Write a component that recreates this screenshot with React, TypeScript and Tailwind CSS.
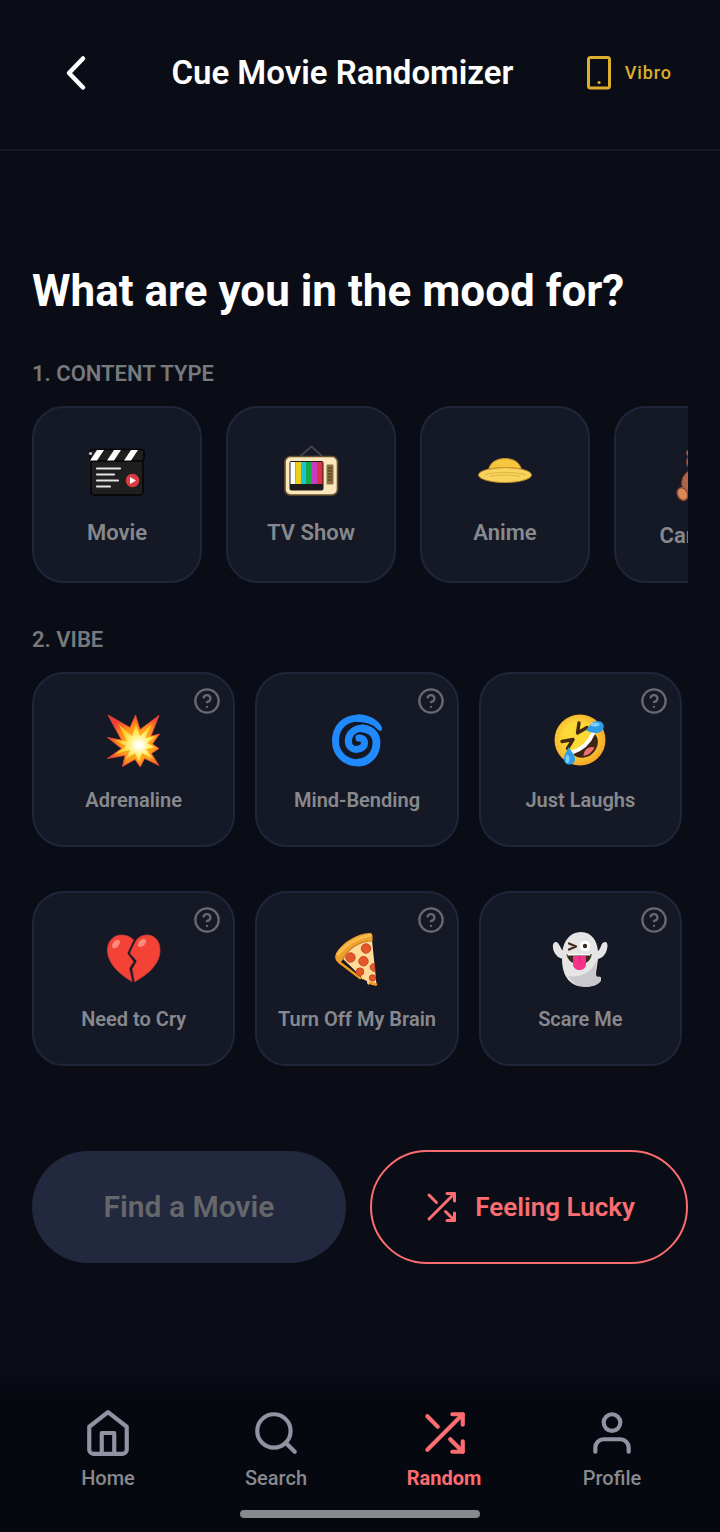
import React from 'react';
import { FiHelpCircle, FiHome, FiSearch, FiShuffle, FiUser } from 'react-icons/fi';

interface Option {
  label: string;
  icon: React.ReactNode;
}

const ClapperIcon = () => (
  <svg viewBox="0 0 60 60" className="h-15 w-15" aria-hidden="true">
    <rect x="4" y="17" width="52" height="35" rx="3.5" fill="#1f1f1f" stroke="#050505" strokeWidth="1.5" />
    <rect x="3" y="6.5" width="54" height="11.5" rx="3" fill="#1f1f1f" stroke="#050505" strokeWidth="1.5" />
    <path d="M10 7h7l-7 10.500H3zM27 7h7l-7 10.500h-7zM44 7h7l-7 10.500h-7z" fill="#fff" />
    <circle cx="3.500" cy="10.500" r="1.600" fill="#c7c7cc" />
    <path d="M10 25.500h23M10 31.500h17M10 37.500h21M10 43.500h13" stroke="#e4e4e4" strokeWidth="2.200" strokeLinecap="round" />
    <circle cx="45.500" cy="37.500" r="6.800" fill="#dc3a41" />
    <path d="M43 34l6 3.500-6 3.500z" fill="#fff" />
  </svg>
);

const TvIcon = () => (
  <svg viewBox="0 0 60 60" className="h-15 w-15" aria-hidden="true">
    <path d="M19.500 13L30.500 3.500 41 13" fill="none" stroke="#464347" strokeWidth="1.800" />
    <rect x="4" y="13.500" width="52.500" height="38.500" rx="5.500" fill="#fbe7bb" stroke="#66512f" strokeWidth="1.600" />
    <rect x="8.500" y="18" width="34" height="29.500" rx="2" fill="#1b1a1d" />
    <path d="M9.500 19h5v22h-5z" fill="#fff" />
    <path d="M14.500 19h5.500v22h-5.500z" fill="#efcf13" />
    <path d="M20 19h5v22h-5z" fill="#1cc3d6" />
    <path d="M25 19h5v22h-5z" fill="#10ad47" />
    <path d="M30 19h6v22h-6z" fill="#c83bc4" />
    <path d="M36 19h5.500v22H36z" fill="#dc3245" />
    <rect x="45.500" y="21.500" width="7" height="20" rx="1" fill="#8a7044" />
    <path d="M47 25h4M47 28h4M47 31h4M47 34h4M47 37h4" stroke="#453518" strokeWidth="1.200" />
  </svg>
);

const HatIcon = () => (
  <svg viewBox="0 0 60 60" className="h-15 w-15" aria-hidden="true">
    <path d="M13.500 27C15 19 22 15.500 30 15.500S45 19 46.500 27v3h-33z" fill="#f6c63e" stroke="#bd892a" />
    <ellipse cx="30" cy="32" rx="26.500" ry="7.500" fill="#f8d45c" stroke="#bd892a" />
    <path d="M13.500 26.500c9-2.500 24-2.500 33 0" fill="none" stroke="#cb9a31" />
    <path d="M9 32c10-3.500 32-3.500 42 0M15 33.500c9-2 21-2 30 0" fill="none" stroke="#d9aa3d" strokeWidth="0.800" />
  </svg>
);

const BearIcon = () => (
  <svg viewBox="0 0 66 66" className="h-[66px] w-[66px]" aria-hidden="true">
    <g fill="#ad6448" stroke="#7d412d">
      <circle cx="25" cy="13" r="4.500" />
      <circle cx="41" cy="13" r="4.500" />
      <ellipse cx="33" cy="43" rx="17.500" ry="15" />
      <ellipse cx="33" cy="22" rx="12.500" ry="11" />
    </g>
    <g fill="#dc8858" stroke="#8c4a30" strokeWidth="1.500">
      <ellipse cx="16.500" cy="54" rx="5" ry="6.500" transform="rotate(-25 16.500 54)" />
      <ellipse cx="49.500" cy="54" rx="5" ry="6.500" transform="rotate(25 49.500 54)" />
      <ellipse cx="33" cy="26" rx="5" ry="4" />
    </g>
    <path d="M28 19h.1M38 19h.1M33 24h.1" stroke="#2c1810" strokeWidth="3" strokeLinecap="round" />
  </svg>
);

const BurstIcon = () => (
  <svg viewBox="0 0 60 60" className="h-15 w-15" aria-hidden="true">
    <defs>
      <radialGradient id="burst" gradientUnits="userSpaceOnUse" cx="35" cy="35" r="32">
        <stop offset="0.250" stopColor="#ffb21a" />
        <stop offset="0.650" stopColor="#ff8a1c" />
        <stop offset="1" stopColor="#ee3f35" />
      </radialGradient>
      <radialGradient id="flash" gradientUnits="userSpaceOnUse" cx="35" cy="35" r="20">
        <stop offset="0.100" stopColor="#fff" />
        <stop offset="0.500" stopColor="#fff07a" />
        <stop offset="1" stopColor="#ffc822" />
      </radialGradient>
    </defs>
    <path
      d="M4 5l22 12.500L31.500 5 36 19.500 55 5.500 47 26l8.500-2-7 10 6.500 4.500-7.500 5L55 55.500l-14.500-7-4.200 8.500-5.300-7.500-12.500 7L21 45.500 3.500 48.500l14-10L3.500 27.500l14 2.500z"
      fill="url(#burst)"
      stroke="#e9483b"
      strokeWidth="0.800"
    />
    <path
      d="M15 15l13 11 4-11 4 11 12-12-7 14 11-2-9 7 8 4.500-9 1.500 7 10-11-6-3 9-4-9-9 6 4-9-15 4 11-8-11-6 12 1z"
      fill="url(#flash)"
    />
  </svg>
);

const CycloneIcon = () => (
  <svg viewBox="0 0 60 60" className="h-15 w-15" aria-hidden="true">
    <path d="M30 4.300C42 4.300 52 10 55 17.500c.7 3-1.500 4.500-3.500 2.800C46 14 39 12 30 12z" fill="#2089fb" />
    <path
      d="M31 8.150C17 8.150 8.500 18 8.500 31c0 12.500 9.500 21.700 21.500 21.700S49.500 43.500 49.500 32.500c0-9-7-14.200-14.500-14.200-8 0-13.700 5.700-13.700 12.700 0 5 3.700 8.500 8.200 8.500s8-3 8-6.500-3-5.500-5.500-5"
      fill="none"
      stroke="#2089fb"
      strokeWidth="7"
      strokeLinecap="round"
    />
    <path d="M34 18.300c8 0 15.500 5.200 15.500 14.200C49.500 43.500 42 52.700 30 52.700" fill="none" stroke="#2089fb" strokeWidth="7.800" />
  </svg>
);

const LaughIcon = () => (
  <svg viewBox="0 0 60 60" className="h-15 w-15" aria-hidden="true">
    <defs>
      <radialGradient id="laugh" cx="0.450" cy="0.450" r="0.550">
        <stop offset="0.500" stopColor="#fdd936" />
        <stop offset="1" stopColor="#f5a92c" />
      </radialGradient>
    </defs>
    <circle cx="30" cy="30" r="25.500" fill="url(#laugh)" />
    <path d="M22 43C32 40 40 32 43 23c7 3 6.500 15-1 21-6 5-15 5.500-20-1z" fill="#3d2415" />
    <path d="M33.500 46c0-6 5.500-10.500 11-8.500-2.500 5-6 7.500-11 8.500z" fill="#ed706f" />
    <path d="M22 42.500C32 39 39.500 32 43 23.500" fill="none" stroke="#fff" strokeWidth="4" strokeLinecap="round" />
    <path d="M29 13l-1.500 10 9.500-5.500M12 31.500l11-2-5.500 9" fill="none" stroke="#422814" strokeWidth="3.400" strokeLinecap="round" strokeLinejoin="round" />
    <path d="M35.500 20c3.500-1.500 5-9 12-9 9 0 8 12-1 12-5 0-7.500-1-11-3z" fill="#2e9de8" />
    <path d="M18.500 37c1.500 3 7 8 6.500 12.500-.5 6.500-10.500 7-11 0-.2-5 3-8 4.500-12.500z" fill="#2e9de8" />
    <ellipse cx="45" cy="14.500" rx="4.500" ry="2" fill="#7cceff" />
    <ellipse cx="17.500" cy="49" rx="1.800" ry="4" fill="#7cceff" />
  </svg>
);

const BrokenHeartIcon = () => (
  <svg viewBox="0 0 60 60" className="h-15 w-15" aria-hidden="true">
    <g fill="#f44336" stroke="#cf3b3b" strokeWidth="0.800">
      <path d="M29.500 11C26 7 21 6 17 6 8 6.500 3.500 13.500 3.500 21 3.500 36 18 46.500 28 52.500l-2.800-13.200 4.200-6.600-6.200-8.400z" />
      <path d="M31.500 12.500C34 8 39 6 43 6c8.500 0 13 7 13 15 0 15-13.500 25-25.300 31.800L28.500 40l4.500-8-7-7.700z" />
    </g>
    <ellipse cx="12" cy="15" rx="3" ry="5" transform="rotate(38 12 15)" fill="#ff8b7d" />
    <ellipse cx="38" cy="14" rx="3" ry="5" transform="rotate(48 38 14)" fill="#ff8b7d" />
  </svg>
);

const PizzaIcon = () => (
  <svg viewBox="0 0 60 60" className="h-15 w-15" aria-hidden="true">
    <path d="M15 29C21 18 33 10 45 11l4.500 44.500c-1 1.500-4 .5-7-1-.5 2-2.500 1.500-2.500-2.500-2-1-2.500 0-3-2-1.500 1.500-2.500 0-3-2.500z" fill="#ffdb99" />
    <path d="M12 33l21 16M43 54l6 1.500" stroke="#f19a1e" strokeWidth="2.500" strokeLinecap="round" />
    <path d="M10 32.500C7 29 8 25 11.500 20.500 20 10.500 31 5 42 4c3-.5 4 1 3.500 7.500C34 11.500 21 19 16 30c-1 3-4 4.500-6 2.500z" fill="#efa02b" />
    <path d="M11 25C20 14 31 8.500 43 6.500" fill="none" stroke="#f9bb4b" strokeWidth="3" strokeLinecap="round" />
    <path d="M16 30c5-10 16-18 29.500-18" fill="none" stroke="#c97b29" strokeWidth="1.200" />
    <g fill="#e3572b" stroke="#c64520">
      <circle cx="39" cy="19.500" r="4.700" />
      <circle cx="23.500" cy="28.500" r="4.700" />
      <circle cx="36.500" cy="32.300" r="4.700" />
      <circle cx="33" cy="42.700" r="3.800" />
      <circle cx="45.500" cy="49" r="3.200" />
      <path d="M47.300 34.500c-6 .5-5.500 7.500.8 8z" />
    </g>
  </svg>
);

const GhostIcon = () => (
  <svg viewBox="0 0 60 60" className="h-15 w-15" aria-hidden="true">
    <path
      d="M31 3C20 3 14 12 12.500 21.500 10 18 9 13.500 6 13c-4 0-3.500 6-2 9.500C5.500 26 8.500 29 12 29.500 12 45 18 57.500 35 57.800c8 .2 15-3 16-6.800.5-3-1-3.500-3-3-3.500.5-1.500-6 0-18 6-1 9.500-8 9.500-13.500 0-5-5-4.500-6.500.5-.8 2-1.500 4-3 5C47 12 42 3 31 3z"
      fill="#e5e5e6"
    />
    <path d="M18 47c12 2 23-3 28.500-15-.5 8-2.500 15 1.500 16 2-.5 3.500 0 3 3-1 4-8 6.800-16 6.800-7 0-13-4-17-10.800z" fill="#c9c9cb" />
    <path d="M19 14.500l7 3-7 3" fill="none" stroke="#442919" strokeWidth="2.200" strokeLinecap="round" strokeLinejoin="round" />
    <circle cx="35" cy="17" r="5.300" fill="#fff" />
    <circle cx="35" cy="17" r="2.200" fill="#3c281a" />
    <path d="M16.500 25h25.200C41 32 36 35 29.500 35S17.500 32 16.500 25z" fill="#3c281a" />
    <path d="M17.500 25h23v1.500h-23z" fill="#fff" />
    <path d="M23 27h13v8c0 8-13 8-13 0z" fill="#f4338b" />
    <path d="M29.500 27v7" stroke="#cc226d" strokeWidth="0.800" />
  </svg>
);

const contentTypes: Option[] = [
  { label: 'Movie', icon: <ClapperIcon /> },
  { label: 'TV Show', icon: <TvIcon /> },
  { label: 'Anime', icon: <HatIcon /> },
  { label: 'Cartoon', icon: <BearIcon /> },
];

const vibes: Option[] = [
  { label: 'Adrenaline', icon: <BurstIcon /> },
  { label: 'Mind-Bending', icon: <CycloneIcon /> },
  { label: 'Just Laughs', icon: <LaughIcon /> },
  { label: 'Need to Cry', icon: <BrokenHeartIcon /> },
  { label: 'Turn Off My Brain', icon: <PizzaIcon /> },
  { label: 'Scare Me', icon: <GhostIcon /> },
];

const tabs = [
  { label: 'Home', Icon: FiHome, active: false },
  { label: 'Search', Icon: FiSearch, active: false },
  { label: 'Random', Icon: FiShuffle, active: true },
  { label: 'Profile', Icon: FiUser, active: false },
];

const Header = () => (
  <header className="flex items-center justify-between border-b-2 border-[#161922] px-12 pt-[45px] pb-12">
    <button type="button" aria-label="Back" className="flex h-14 w-14 items-center justify-center text-white">
      <svg viewBox="0 0 40 40" className="h-10 w-10" fill="none" stroke="currentColor" strokeWidth="4.500" strokeLinecap="round" strokeLinejoin="round">
        <path d="M27 5.500L13 20l14 14.500" />
      </svg>
    </button>
    <h1 className="text-[33px] leading-10 font-semibold text-white">Cue Movie Randomizer</h1>
    <button type="button" className="flex items-center gap-2 text-lg font-medium tracking-wider text-[#dcae2b]">
      <svg viewBox="0 0 36 36" className="h-9 w-9" fill="none" stroke="currentColor" aria-hidden="true">
        <rect x="7.500" y="2.500" width="21" height="30.500" rx="2" strokeWidth="3" />
        <path d="M18 27.500h.1" strokeWidth="3" strokeLinecap="round" />
      </svg>
      Vibro
    </button>
  </header>
);

const ContentCard = ({ label, icon }: Option) => (
  <button
    type="button"
    className="flex min-h-[177px] w-[170px] shrink-0 flex-col items-center justify-center gap-4 rounded-[32px] border-2 border-[#20263a] bg-[#151926] text-[22px] leading-7 font-semibold text-[#88898e]"
  >
    {icon}
    {label}
  </button>
);

const VibeCard = ({ label, icon }: Option) => (
  <div className="relative">
    <button
      type="button"
      className="flex min-h-[175px] w-full flex-col items-center justify-center gap-5 rounded-[32px] border-2 border-[#20263a] bg-[#151926] text-xl leading-5 font-semibold text-[#88898e]"
    >
      {icon}
      {label}
    </button>
    <button type="button" aria-label={`About ${label}`} className="absolute top-[15px] right-[14px] text-[#67696f]">
      <FiHelpCircle className="h-7 w-7" />
    </button>
  </div>
);

const TabBar = () => (
  <nav className="mt-auto bg-linear-to-b from-[#0a0d16] to-[#05080f] to-20% px-6 pt-10 pb-3.5">
    <div className="grid grid-cols-4">
      {tabs.map(({ label, Icon, active }) => (
        <a
          key={label}
          href="#"
          aria-current={active ? 'page' : undefined}
          className={
            active
              ? 'flex flex-col items-center gap-1.5 text-xl leading-7 font-bold text-[#fb6d70]'
              : 'flex flex-col items-center gap-1.5 text-xl leading-7 font-medium text-[#88898e]'
          }
        >
          <Icon className={active ? 'h-[50px] w-[50px]' : 'h-[50px] w-[50px] text-[#9293a2]'} />
          {label}
        </a>
      ))}
    </div>
    <div className="mx-auto mt-[18px] h-2 w-60 rounded-full bg-[#88898c]" />
  </nav>
);

const App: React.FC = () => {
  return (
    <div className="flex min-h-screen flex-col bg-[#0a0d16] font-[Roboto,sans-serif]">
      <Header />
      <main className="px-8 pt-28 pb-10">
        <h2 className="text-[44px] leading-14 font-bold text-white">What are you in the mood for?</h2>

        <h3 className="mt-[41px] text-[22px] leading-7 font-semibold text-[#77797d]">1. CONTENT TYPE</h3>
        <div className="mt-[18px] flex gap-6 overflow-hidden">
          {contentTypes.map((item) => (
            <ContentCard key={item.label} {...item} />
          ))}
        </div>

        <h3 className="mt-[43px] text-[22px] leading-7 font-semibold text-[#77797d]">2. VIBE</h3>
        <div className="mt-[18px] grid grid-cols-3 gap-x-5 gap-y-11 pr-1.5">
          {vibes.map((item) => (
            <VibeCard key={item.label} {...item} />
          ))}
        </div>

        <div className="mt-[84px] flex items-center gap-6">
          <button type="button" className="h-28 flex-1 rounded-full bg-[#22283d] text-[30px] leading-9 font-semibold text-[#66676b]">
            Find a Movie
          </button>
          <button
            type="button"
            className="flex h-[114px] flex-1 items-center justify-center gap-4 rounded-full border-2 border-[#fb6d70] text-[26px] leading-8 font-semibold text-[#fb6d70]"
          >
            <FiShuffle className="h-9 w-9" />
            Feeling Lucky
          </button>
        </div>
      </main>
      <TabBar />
    </div>
  );
};

export default App;
